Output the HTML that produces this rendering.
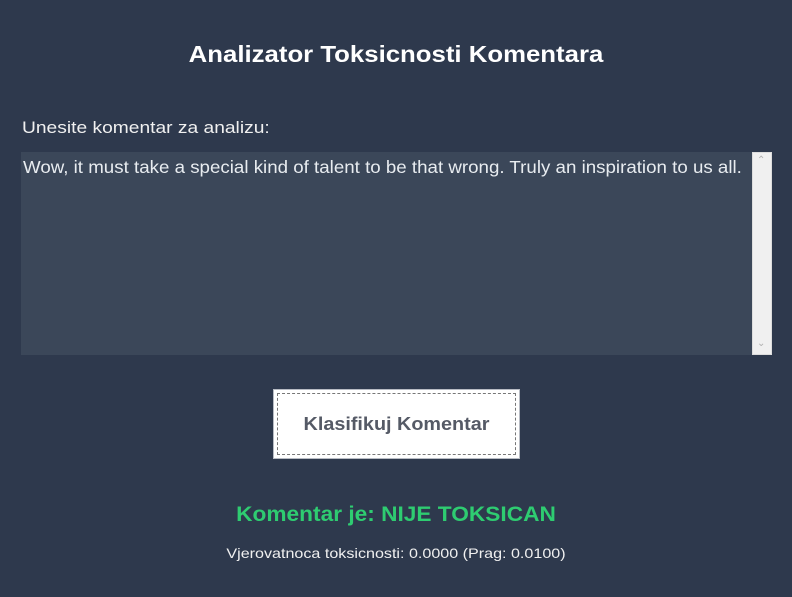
<!DOCTYPE html>
<html><head><style>
body{margin:0;width:792px;height:597px;background:#2e394d;font-family:"Liberation Sans",sans-serif;position:relative;overflow:hidden;color:#fff}
.a{position:absolute;white-space:nowrap}
.c{transform-origin:center}
</style></head><body>
<div class="a c" style="left:0;width:792px;top:41px;text-align:center;font-weight:bold;font-size:23px;transform:scaleX(1.12)">Analizator Toksicnosti Komentara</div>
<div class="a" style="left:22px;top:118px;font-size:17px;color:#f0f0f0;transform:scaleX(1.13);transform-origin:left">Unesite komentar za analizu:</div>
<div class="a" style="left:21px;top:152px;width:731px;height:203px;background:#3b4759"></div>
<div class="a" style="left:23px;top:157px;font-size:17.5px;color:#e8ecf0;transform:scaleX(1.07);transform-origin:left">Wow, it must take a special kind of talent to be that wrong. Truly an inspiration to us all.</div>
<div class="a" style="left:752px;top:152px;width:20px;height:203px;background:#f0f0f0;border:1px solid #ddd;box-sizing:border-box"></div>
<div class="a" style="left:757px;top:155px;font-size:10px;color:#b0b0b0">&#8963;</div>
<div class="a" style="left:757px;top:338px;font-size:10px;color:#b0b0b0">&#8964;</div>
<div class="a" style="left:273px;top:389px;width:247px;height:70px;background:#fff;border:1px solid #b8bcc4;box-sizing:border-box"></div>
<div class="a" style="left:277px;top:393px;width:239px;height:62px;border:1px dashed #777;box-sizing:border-box"></div>
<div class="a c" style="left:273px;width:247px;top:414px;text-align:center;font-weight:bold;font-size:18px;color:#555a66;transform:scaleX(1.1)">Klasifikuj Komentar</div>
<div class="a c" style="left:0;width:792px;top:503px;text-align:center;font-weight:bold;font-size:21px;color:#2ecc71;transform:scaleX(1.08)">Komentar je: NIJE TOKSICAN</div>
<div class="a c" style="left:0;width:792px;top:545px;text-align:center;font-size:14px;color:#f0f0f0;transform:scaleX(1.15)">Vjerovatnoca toksicnosti: 0.0000 (Prag: 0.0100)</div>
</body></html>
